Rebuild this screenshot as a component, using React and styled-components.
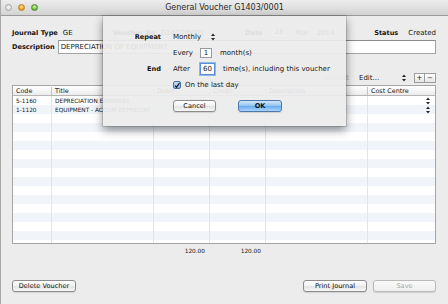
import React from "react";
import styled, { createGlobalStyle, css } from "styled-components";

const GlobalStyle = createGlobalStyle`
  html, body {
    margin: 0;
    padding: 0;
    background: #ececec;
  }
  body {
    font-family: "DejaVu Sans", "Liberation Sans", sans-serif;
    color: #161616;
  }
  * { box-sizing: border-box; }
`;

const COLS = "39px 102px 56px 56px 102px 65px";

const rows = [
  { code: "5-1160", title: "DEPRECIATION EXPENSES", debit: "120.00", credit: "", cc: true },
  { code: "1-1120", title: "EQUIPMENT - ACCUM DEPRECIAT", debit: "", credit: "120.00", cc: true },
];

const Arrows = ({ color = "#222" }) => (
  <svg width="4" height="8" viewBox="0 0 4 8">
    <polygon points="0,3 2,0.5 4,3" fill={color} />
    <polygon points="0,5 2,7.5 4,5" fill={color} />
  </svg>
);

const App = () => {
  const body = [];
  for (let i = 0; i < 17; i++) body.push(rows[i] || {});

  return (
    <>
      <GlobalStyle />
      <Window>
        <TitleBar>
          <Lights>
            <Light $c="none" />
            <Light $c="orange" />
            <Light $c="green" />
          </Lights>
          <Title>General Voucher G1403/0001</Title>
          <span />
        </TitleBar>

        <Content>
          <InfoRow>
            <Group>
              <Label>Journal Type</Label>
              <span>GE</span>
            </Group>
            <Group>
              <Label>Voucher No</Label>
              <span>G1403/0001</span>
            </Group>
            <Group $gap={8}>
              <Label>Date</Label>
              <DateBox>28</DateBox>
              <span>Mar</span>
              <span>2014</span>
            </Group>
            <Group $gap={10}>
              <Label>Status</Label>
              <span>Created</span>
            </Group>
          </InfoRow>

          <DescRow>
            <Label>Description</Label>
            <TextField>DEPRECIATION OF EQUIPMENT</TextField>
          </DescRow>

          <ToolRow>
            <Dim>Repeat</Dim>
            <EditPopup>
              <span>Edit...</span>
              <Arrows />
            </EditPopup>
            <Segmented>
              <SegBtn>+</SegBtn>
              <SegBtn>−</SegBtn>
            </Segmented>
          </ToolRow>

          <Table>
            <HeadRow>
              <HeadCell>Code</HeadCell>
              <HeadCell>Title</HeadCell>
              <HeadCell>Debit</HeadCell>
              <HeadCell>Credit</HeadCell>
              <HeadCell>Description</HeadCell>
              <HeadCell $last>Cost Centre</HeadCell>
            </HeadRow>
            <Body>
              {body.map((r, i) => (
                <Row key={i} $odd={i % 2 === 1}>
                  <Cell>{r.code}</Cell>
                  <Cell>{r.title}</Cell>
                  <Cell $num>{r.debit}</Cell>
                  <Cell $num>{r.credit}</Cell>
                  <Cell />
                  <Cell $last $end>
                    {r.cc && <Arrows />}
                  </Cell>
                </Row>
              ))}
            </Body>
          </Table>

          <Totals>
            <span />
            <span />
            <Total>120.00</Total>
            <Total>120.00</Total>
          </Totals>

          <Footer>
            <Button $w={64}>Delete Voucher</Button>
            <Spacer />
            <Button $w={64}>Print Journal</Button>
            <Button $w={63} $disabled>
              Save
            </Button>
          </Footer>
        </Content>

        <Sheet>
          <SheetGrid>
            <SheetLabel>Repeat</SheetLabel>
            <Line>
              <Popup>
                <span>Monthly</span>
                <Arrows />
              </Popup>
            </Line>

            <span />
            <Line>
              <Word>Every</Word>
              <NumField $w={12}>1</NumField>
              <span>month(s)</span>
            </Line>

            <SheetLabel>End</SheetLabel>
            <Line>
              <Word>After</Word>
              <NumField $w={15} $focus>
                60
              </NumField>
              <span>time(s), including this voucher</span>
            </Line>

            <span />
            <CheckLine>
              <Check>
                <svg width="7" height="7" viewBox="0 0 8 8">
                  <path d="M1.5 4.2 L3.3 6.3 L7.4 0.6" stroke="#111" strokeWidth="1.5" fill="none" />
                </svg>
              </Check>
              <span>On the last day</span>
            </CheckLine>

            <span />
            <ButtonLine>
              <Button $w={43}>Cancel</Button>
              <Button $w={44} $primary>
                OK
              </Button>
            </ButtonLine>
          </SheetGrid>
        </Sheet>
      </Window>
    </>
  );
};

export default App;

const Window = styled.div`
  position: relative;
  width: 448px;
  height: 304px;
  display: flex;
  flex-direction: column;
  background: #ececec;
  border-left: 1px solid #a9a9a9;
  overflow: hidden;
  font-size: 7px;
`;

const TitleBar = styled.div`
  height: 16px;
  flex-shrink: 0;
  display: grid;
  grid-template-columns: 1fr auto 1fr;
  align-items: center;
  background: linear-gradient(#ededed, #d3d3d3);
  border-bottom: 1px solid #999;
`;

const Lights = styled.div`
  display: flex;
  gap: 6px;
  padding-left: 4px;
`;

const lightColors = {
  none: css`
    background: radial-gradient(circle at 50% 40%, #f3f3f3, #cfcfcf);
    border: 1px solid #a8a8a8;
  `,
  orange: css`
    background: radial-gradient(circle at 50% 35%, #ffe0a0, #f4a21a 60%, #c77a0a);
    border: 1px solid #b9801e;
  `,
  green: css`
    background: radial-gradient(circle at 50% 35%, #d6f5b4, #6ec43b 60%, #3f8d1c);
    border: 1px solid #4c8a2c;
  `,
};

const Light = styled.span`
  width: 7px;
  height: 7px;
  border-radius: 50%;
  ${(p) => lightColors[p.$c]}
`;

const Title = styled.div`
  font-size: 8px;
  color: #2a2a2a;
`;

const Content = styled.div`
  flex: 1;
  display: flex;
  flex-direction: column;
  padding: 11px 12px 0 11px;
`;

const InfoRow = styled.div`
  height: 10px;
  display: grid;
  grid-template-columns: 101px 132px 1fr auto;
  align-items: center;
`;

const Group = styled.div`
  display: flex;
  align-items: center;
  gap: ${(p) => p.$gap || 5}px;
`;

const Label = styled.span`
  font-weight: bold;
  font-size: 6.6px;
`;

const DateBox = styled.span`
  border: 1px solid #cfcfcf;
  background: #fff;
  padding: 0 3px;
  line-height: 9px;
`;

const DescRow = styled.div`
  margin-top: 3px;
  height: 14px;
  display: flex;
  align-items: center;
  gap: 3px;
`;

const TextField = styled.div`
  flex: 1;
  height: 14px;
  background: #fff;
  border: 1px solid #a4a4a4;
  border-top-color: #8c8c8c;
  padding-left: 2px;
  display: flex;
  align-items: center;
`;

const ToolRow = styled.div`
  margin-top: 19px;
  height: 10px;
  display: flex;
  align-items: center;
  justify-content: flex-end;
`;

const Dim = styled.span`
  color: #a9a9a9;
  margin-right: 10px;
`;

const EditPopup = styled.div`
  width: 50px;
  display: flex;
  align-items: center;
  justify-content: space-between;
  padding-right: 3px;
  margin-right: 5px;
`;

const Segmented = styled.div`
  display: flex;
`;

const SegBtn = styled.span`
  width: 11px;
  height: 10px;
  display: flex;
  align-items: center;
  justify-content: center;
  border: 1px solid #9c9c9c;
  background: linear-gradient(#fff, #e6e6e6);
  font-size: 7px;
  & + & {
    border-left: none;
  }
`;

const Table = styled.div`
  margin-top: 2px;
  height: 159px;
  background: #fff;
  border: 1px solid #a5a5a5;
  display: flex;
  flex-direction: column;
  overflow: hidden;
`;

const HeadRow = styled.div`
  height: 10px;
  flex-shrink: 0;
  display: grid;
  grid-template-columns: ${COLS};
  background: linear-gradient(#fff, #ececec);
  border-bottom: 1px solid #b5b5b5;
`;

const HeadCell = styled.div`
  font-size: 6.4px;
  padding-left: 3px;
  display: flex;
  align-items: center;
  border-right: ${(p) => (p.$last ? "none" : "1px solid #c4c4c4")};
  margin: 1px 0;
`;

const Body = styled.div`
  flex: 1;
  overflow: hidden;
`;

const Row = styled.div`
  height: 9px;
  display: grid;
  grid-template-columns: ${COLS};
  background: ${(p) => (p.$odd ? "#f1f5fa" : "#fff")};
`;

const Cell = styled.div`
  font-size: 5.8px;
  padding: 0 3px;
  display: flex;
  align-items: center;
  justify-content: ${(p) => (p.$num || p.$end ? "flex-end" : "flex-start")};
  white-space: nowrap;
  overflow: hidden;
  border-right: ${(p) => (p.$last ? "none" : "1px solid #e4e4e4")};
`;

const Totals = styled.div`
  margin-top: 3px;
  height: 8px;
  padding: 0 1px;
  display: grid;
  grid-template-columns: ${COLS};
  align-items: center;
`;

const Total = styled.span`
  font-size: 5.8px;
  text-align: right;
  padding-right: 5px;
`;

const Footer = styled.div`
  margin-top: 25px;
  display: flex;
  gap: 6px;
`;

const Spacer = styled.div`
  flex: 1;
`;

const Button = styled.div`
  width: ${(p) => p.$w}px;
  height: 12px;
  display: flex;
  align-items: center;
  justify-content: center;
  border-radius: 3px;
  font-size: 6.6px;
  border: 1px solid ${(p) => (p.$primary ? "#4d77ad" : p.$disabled ? "#b9b9b9" : "#8d8d8d")};
  color: ${(p) => (p.$disabled ? "#a8a8a8" : "#111")};
  background: ${(p) =>
    p.$primary
      ? "linear-gradient(#d2e7fb 0%, #96c7f3 45%, #6aaeee 55%, #a9d6fb 100%)"
      : p.$disabled
      ? "linear-gradient(#fafafa, #eeeeee)"
      : "linear-gradient(#ffffff 0%, #f2f2f2 50%, #e4e4e4 55%, #f7f7f7 100%)"};
  box-shadow: 0 1px 1px rgba(0, 0, 0, 0.12);
  font-weight: ${(p) => (p.$primary ? "bold" : "normal")};
`;

const Sheet = styled.div`
  position: absolute;
  left: 102px;
  top: 16px;
  width: 243px;
  height: 110px;
  background: rgba(236, 236, 236, 0.93);
  box-shadow: 0 4px 9px rgba(0, 0, 0, 0.45), 0 0 0 1px rgba(0, 0, 0, 0.12);
  padding-top: 16px;
`;

const SheetGrid = styled.div`
  display: grid;
  grid-template-columns: 58px 1fr;
  grid-template-rows: 10px 11px 12px 10px 12px;
  column-gap: 12px;
  row-gap: 5px;
  align-items: center;
`;

const SheetLabel = styled.span`
  font-weight: bold;
  font-size: 6.6px;
  text-align: right;
`;

const Line = styled.div`
  display: flex;
  align-items: center;
  gap: 8px;
`;

const CheckLine = styled(Line)`
  gap: 4px;
`;

const ButtonLine = styled(Line)`
  gap: 22px;
  margin-top: 9px;
`;

const Popup = styled.div`
  width: 42px;
  display: flex;
  align-items: center;
  justify-content: space-between;
`;

const Word = styled.span`
  width: 19px;
`;

const NumField = styled.span`
  width: ${(p) => p.$w}px;
  height: ${(p) => (p.$focus ? 12 : 10)}px;
  display: flex;
  align-items: center;
  justify-content: center;
  background: #fff;
  border: 1px solid #9a9a9a;
  ${(p) =>
    p.$focus &&
    css`
      border: 1px solid #5b8fd6;
      box-shadow: 0 0 0 1px #8db7ea;
    `}
`;

const Check = styled.span`
  flex-shrink: 0;
  width: 8px;
  height: 8px;
  border-radius: 2px;
  border: 1px solid #4a6fa3;
  background: linear-gradient(#c9e0f8, #7fb1ea);
  display: flex;
  align-items: center;
  justify-content: center;
`;
